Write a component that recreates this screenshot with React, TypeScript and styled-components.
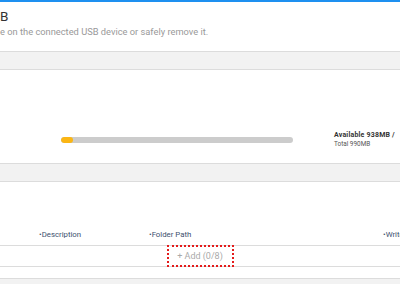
import React from "react";
import styled, { createGlobalStyle } from "styled-components";

const Global = createGlobalStyle`
  html, body { margin: 0; padding: 0; background: #f2f2f2; overflow: hidden; }
  body { font-family: Roboto, "Liberation Sans", Arial, sans-serif; }
  #root { width: 400px; height: 284px; overflow: hidden; }
`;

const Page = styled.div`
  width: 400px;
  height: 284px;
  overflow: hidden;
  background: #f2f2f2;
`;

const TopLine = styled.div`
  height: 2px;
  background: #1e90f0;
`;

const Header = styled.div`
  height: 49px;
  background: #fff;
  padding-top: 7px;
  box-sizing: border-box;
`;

const Title = styled.div`
  font-size: 13.5px;
  line-height: 15px;
  color: #333;
`;

const Subtitle = styled.div`
  margin-top: 2px;
  font-size: 9.3px;
  line-height: 11px;
  color: #999;
  white-space: nowrap;
`;

const Band = styled.div`
  height: 17px;
  background: #f2f2f2;
  border-top: 1px solid #dcdcdc;
  border-bottom: 1px solid #dcdcdc;
`;

const StoragePanel = styled.div`
  height: 93px;
  background: #fff;
  display: flex;
  align-items: flex-start;
  padding-top: 61px;
  box-sizing: border-box;
`;

const BarTrack = styled.div`
  margin-left: 61px;
  margin-top: 6px;
  width: 232px;
  height: 6px;
  border-radius: 3px;
  background: #cccccc;
  overflow: hidden;
`;

const BarFill = styled.div`
  height: 100%;
  background: #fbb614;
  border-radius: 3px;
`;

const StorageText = styled.div`
  margin-left: 41px;
  font-size: 6.4px;
  line-height: 9px;
  color: #555;
  white-space: nowrap;
`;

const Strong = styled.div`
  font-size: 7px;
  font-weight: 700;
  letter-spacing: 0.2px;
  color: #333;
`;

const TablePanel = styled.div`
  background: #fff;
  height: 63px;
  display: flex;
  flex-direction: column;
  justify-content: flex-end;
`;

const HeadRow = styled.div`
  display: grid;
  grid-template-columns: 110px 234px 1fr;
  padding-left: 39px;
  height: 22px;
  align-items: center;
  overflow: hidden;
`;

const HeadCell = styled.div`
  font-size: 7.8px;
  color: #3c4f6e;
  white-space: nowrap;
  &::before { content: "•"; }
`;

const AddRow = styled.div`
  height: 20px;
  background: #fff;
  border-top: 1px solid #dcdcdc;
  border-bottom: 1px solid #dcdcdc;
  display: flex;
  justify-content: center;
  align-items: center;
`;

const AddButton = styled.div`
  width: 67px;
  height: 22px;
  box-sizing: border-box;
  border: 2px dotted #e41b1b;
  display: flex;
  align-items: center;
  justify-content: center;
  font-size: 9px;
  color: #aaa;
  white-space: nowrap;
`;

const Spacer = styled.div`
  height: 11px;
  background: #fff;
  border-bottom: 1px solid #dcdcdc;
`;

export default function App() {
  const used = 52 / 990;
  return (
    <Page>
      <Global />
      <TopLine />
      <Header>
        <Title>B</Title>
        <Subtitle>e on the connected USB device or safely remove it.</Subtitle>
      </Header>
      <Band />
      <StoragePanel>
        <BarTrack>
          <BarFill style={{ width: `${Math.max(used * 100, 4.8)}%` }} />
        </BarTrack>
        <StorageText>
          <Strong>Available 938MB /</Strong>
          <div>Total 990MB</div>
        </StorageText>
      </StoragePanel>
      <Band />
      <TablePanel>
        <HeadRow>
          <HeadCell>Description</HeadCell>
          <HeadCell>Folder Path</HeadCell>
          <HeadCell>Write Permission</HeadCell>
        </HeadRow>
      </TablePanel>
      <AddRow>
        <AddButton>+ Add (0/8)</AddButton>
      </AddRow>
      <Spacer />
    </Page>
  );
}
